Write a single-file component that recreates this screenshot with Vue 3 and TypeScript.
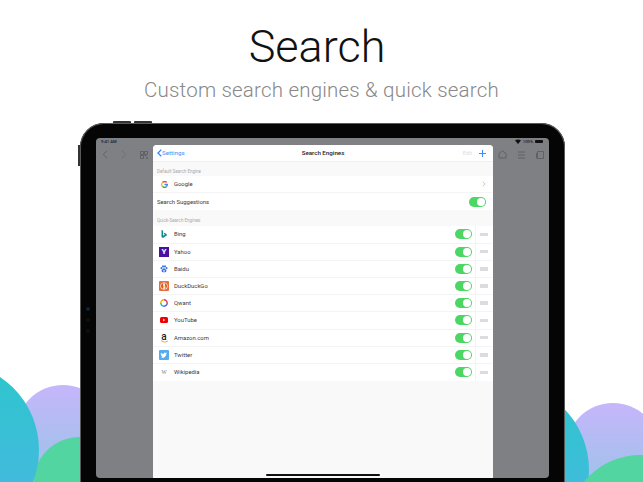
<script setup lang="ts">
interface Engine {
  name: string
  icon: string
}

const engines: Engine[] = [
  { name: 'Bing', icon: 'bing' },
  { name: 'Yahoo', icon: 'yahoo' },
  { name: 'Baidu', icon: 'baidu' },
  { name: 'DuckDuckGo', icon: 'duck' },
  { name: 'Qwant', icon: 'qwant' },
  { name: 'YouTube', icon: 'youtube' },
  { name: 'Amazon.com', icon: 'amazon' },
  { name: 'Twitter', icon: 'twitter' },
  { name: 'Wikipedia', icon: 'wiki' }
]
</script>

<template>
  <div class="page">
    <div class="blob teal left"></div>
    <div class="blob purple left"></div>
    <div class="blob green left"></div>
    <div class="blob teal right"></div>
    <div class="blob purple right"></div>
    <div class="blob green right"></div>

    <h1 class="title">Search</h1>
    <p class="subtitle">Custom search engines &amp; quick search</p>

    <div class="device">
      <span class="hw top one"></span>
      <span class="hw top two"></span>
      <span class="hw side"></span>
      <span class="cam c1"></span>
      <span class="cam c2"></span>
      <span class="cam c3"></span>

      <div class="screen">
        <div class="status">
          <span>9:41 AM</span>
          <span class="status-right">
            <svg width="6" height="5" viewBox="0 0 6 5"><path d="M0 1.600C1.700 0 4.300 0 6 1.600L3 5z" fill="#111" /></svg>
            100%
            <i class="battery"></i>
          </span>
        </div>
        <div class="toolbar">
          <div class="tools">
            <svg width="6" height="9" viewBox="0 0 6 9"><path d="M5 .8 1.200 4.500 5 8.200" class="tool" /></svg>
            <svg width="6" height="9" viewBox="0 0 6 9"><path d="M1 .8 4.800 4.500 1 8.200" class="tool dim" /></svg>
            <svg width="8" height="8" viewBox="0 0 8 8">
              <path d="M.5.5h3v3h-3zM4.500.5h3v3h-3zM.5 4.500h3v3h-3z" class="tool" />
              <path d="M4.500 4.500h1.500v1.500M7.500 6v1.500H6" class="tool" />
            </svg>
          </div>
          <div class="tools">
            <svg width="9" height="9" viewBox="0 0 9 9"><path d="M1 8V3.600L4.500.8 8 3.600V8z" class="tool" /></svg>
            <svg width="9" height="8" viewBox="0 0 9 8"><path d="M1 1h7M1 4h7M1 7h7" class="tool" /></svg>
            <svg width="8" height="8" viewBox="0 0 8 8"><path d="M1.500.5h6v7h-6zM.5 2v5.500" class="tool" /></svg>
          </div>
        </div>

        <div class="sheet">
          <header class="nav">
            <span class="back">
              <svg width="5" height="8" viewBox="0 0 5 8"><path d="M4.300.6 1 4l3.300 3.400" fill="none" stroke="#2f87f5" stroke-width="1.300" /></svg>
              Settings
            </span>
            <strong class="nav-title">Search Engines</strong>
            <span class="nav-actions">
              <span class="edit">Edit</span>
              <svg width="7" height="7" viewBox="0 0 7 7"><path d="M3.500 0v7M0 3.500h7" stroke="#3d8ff5" stroke-width="1.100" /></svg>
            </span>
          </header>

          <div class="section-label first">Default Search Engine</div>
          <div class="group">
            <div class="row">
              <span class="icon">
                <svg width="7" height="7" viewBox="0 0 14 14" fill="none" stroke-width="2.600">
                  <path d="M11.300 3 A5.700 5.700 0 0 0 3 2.900" stroke="#ea4335" />
                  <path d="M3 2.900 A5.700 5.700 0 0 0 3 11.100" stroke="#fbbc05" />
                  <path d="M3 11.100 A5.700 5.700 0 0 0 11 11" stroke="#34a853" />
                  <path d="M11 11 A5.700 5.700 0 0 0 12.700 7H7" stroke="#4285f4" />
                </svg>
              </span>
              <span class="name">Google</span>
              <svg class="chev" width="4" height="6" viewBox="0 0 4 6"><path d="M.7.6 3.200 3 .7 5.400" fill="none" stroke="#c6c6c8" /></svg>
            </div>
            <div class="row plain">
              <span class="name">Search Suggestions</span>
              <span class="switch"><i></i></span>
            </div>
          </div>

          <div class="section-label">Quick-Search Engines</div>
          <div class="group">
            <div v-for="engine in engines" :key="engine.name" class="row">
              <span class="icon">
                <svg v-if="engine.icon === 'bing'" width="6" height="8" viewBox="0 0 6 8">
                  <path d="M.5 0 2 .5v5.200l2-1.200-1-.5L2.500 2.400 5.700 4v1.400L2 8 .5 7z" fill="#0f8a8c" />
                </svg>
                <span v-else-if="engine.icon === 'yahoo'" class="tile yahoo">Y</span>
                <svg v-else-if="engine.icon === 'baidu'" width="8" height="8" viewBox="0 0 8 8" fill="#3a6fe8">
                  <ellipse cx="1.400" cy="3.200" rx=".9" ry="1.100" />
                  <ellipse cx="3" cy="1.400" rx=".9" ry="1.200" />
                  <ellipse cx="5" cy="1.400" rx=".9" ry="1.200" />
                  <ellipse cx="6.600" cy="3.200" rx=".9" ry="1.100" />
                  <path d="M4 3.300c1 0 1.300 1 2 1.500.8.700.6 2.500-1 2.500H3C1.400 7.300 1.200 5.500 2 4.800c.7-.5 1-1.500 2-1.500z" />
                  <ellipse cx="4" cy="5.800" rx="1" ry=".9" fill="#cdddfb" />
                </svg>
                <svg v-else-if="engine.icon === 'duck'" width="10" height="10" viewBox="0 0 10 10">
                  <rect width="10" height="10" rx="1" fill="#e4713a" />
                  <circle cx="5" cy="5" r="3.600" fill="#fff" />
                  <circle cx="5" cy="5" r="3" fill="#de5833" />
                  <path d="M3.900 2.500h2.200l-.3 2 .7 1.500-1 2H4.300l.2-2.500z" fill="#fff" />
                  <path d="M4.800 5.300h1.500v.7H4.800z" fill="#f5c518" />
                </svg>
                <svg v-else-if="engine.icon === 'qwant'" width="8" height="8" viewBox="0 0 8 8" fill="none" stroke-width="1.400">
                  <path d="M4 .8A3.200 3.200 0 0 0 .8 4" stroke="#f2b705" />
                  <path d="M.8 4A3.200 3.200 0 0 0 4 7.200" stroke="#19b6c9" />
                  <path d="M4 7.200A3.200 3.200 0 0 0 7.200 4" stroke="#5a55d9" />
                  <path d="M7.200 4A3.200 3.200 0 0 0 4 .8" stroke="#e8385b" />
                </svg>
                <svg v-else-if="engine.icon === 'youtube'" width="8" height="6" viewBox="0 0 8 6">
                  <rect width="8" height="6" rx="1.500" fill="#f00000" />
                  <path d="M3.200 1.700 5.200 3 3.200 4.300z" fill="#fff" />
                </svg>
                <span v-else-if="engine.icon === 'amazon'" class="amazon">
                  a
                  <svg width="7" height="3" viewBox="0 0 7 3"><path d="M.3.600C2 2.400 4.800 2.500 6.700.8" fill="none" stroke="#f29a1f" stroke-width="1.100" /></svg>
                </span>
                <svg v-else-if="engine.icon === 'twitter'" width="10" height="10" viewBox="0 0 10 10">
                  <rect width="10" height="10" rx="1" fill="#55acee" />
                  <path d="M8 3.100c-.3.100-.5.200-.8.200.3-.2.500-.4.600-.7-.3.200-.6.300-.9.300a1.300 1.300 0 0 0-2.200 1.200C3.600 4 2.700 3.500 2 2.800c-.4.600-.2 1.300.4 1.700-.2 0-.4 0-.6-.1 0 .6.400 1.100 1 1.300h-.6c.2.500.6.800 1.200.9-.5.400-1.100.6-1.800.5a3.700 3.700 0 0 0 5.700-3.300c.3-.2.500-.4.700-.7z" fill="#fff" />
                </svg>
                <span v-else class="wiki">W</span>
              </span>
              <span class="name">{{ engine.name }}</span>
              <span class="switch"><i></i></span>
              <span class="handle"><i></i></span>
            </div>
          </div>

          <div class="home-bar"></div>
        </div>
      </div>
    </div>
  </div>
</template>

<style>
html,
body {
  margin: 0;
  background: #fff;
}
</style>

<style scoped>
.page {
  position: relative;
  width: 643px;
  height: 482px;
  overflow: hidden;
  background: #fff;
  font-family: Roboto, "Liberation Sans", sans-serif;
  text-align: center;
}

.blob {
  position: absolute;
  border-radius: 50%;
}
.teal {
  width: 176px;
  height: 176px;
  background: linear-gradient(#2cc6cc, #4cb6e4);
}
.teal.left {
  left: -137px;
  top: 362px;
  z-index: 3;
}
.teal.right {
  left: 413px;
  top: 382px;
  z-index: 1;
}
.purple {
  width: 94px;
  height: 94px;
  background: linear-gradient(#c6b6fb, #98c4e6);
}
.purple.left {
  left: 16px;
  top: 385px;
}
.purple.right {
  left: 566px;
  top: 403px;
  z-index: 0;
}
.green {
  background: #53d5a1;
}
.green.left {
  left: 33px;
  top: 437px;
  width: 94px;
  height: 94px;
  z-index: 1;
}
.green.right {
  left: 568px;
  top: 455px;
  width: 144px;
  height: 144px;
  z-index: 2;
}

.title,
.subtitle {
  position: relative;
  margin: 0;
  font-weight: 300;
}
.title {
  padding: 20px 9px 0 0;
  height: 54px;
  line-height: 54px;
  font-size: 45px;
  color: #111;
}
.subtitle {
  margin-top: 2px;
  height: 28px;
  line-height: 28px;
  font-size: 20.500px;
  letter-spacing: 0.2px;
  color: #888;
}

.device {
  position: relative;
  z-index: 4;
  box-sizing: border-box;
  width: 485px;
  height: 380px;
  margin: 19px 0 0 80px;
  padding: 15px 16px 0;
  background: #050505;
  border-radius: 24px;
  box-shadow: inset 0 0 0 1px #5a5a5a;
}
.hw {
  position: absolute;
  background: #333;
}
.hw.top {
  top: -2px;
  width: 18px;
  height: 2px;
  border-radius: 1px 1px 0 0;
}
.hw.one {
  left: 33px;
}
.hw.two {
  left: 54px;
}
.hw.side {
  left: -2px;
  top: 22px;
  width: 2px;
  height: 21px;
}
.cam {
  position: absolute;
  left: 6px;
  width: 4px;
  height: 4px;
  border-radius: 50%;
  background: #101010;
}
.c1 {
  top: 184px;
  background: #10233a;
}
.c2 {
  top: 195px;
}
.c3 {
  top: 206px;
}

.screen {
  position: relative;
  box-sizing: border-box;
  height: 340px;
  padding: 0 5px;
  overflow: hidden;
  background: #7f8083;
  border-radius: 4px;
  text-align: left;
}
.status {
  display: flex;
  justify-content: space-between;
  height: 7px;
  line-height: 8px;
  font-size: 4.200px;
  font-weight: 500;
  color: #1d1d1f;
}
.status-right {
  display: flex;
  align-items: center;
  gap: 2px;
  padding-right: 1px;
}
.battery {
  display: block;
  width: 8px;
  height: 3.500px;
  border-radius: 1px;
  background: #111;
}
.toolbar {
  display: flex;
  justify-content: space-between;
  padding: 5px 0 0 1px;
}
.tools {
  display: flex;
  align-items: center;
  gap: 10px;
}
.tools:first-child {
  gap: 13px;
}
.tool {
  fill: none;
  stroke: #606164;
  stroke-width: 1;
}
.tool.dim {
  stroke: #6f7073;
}

.sheet {
  position: absolute;
  left: 57px;
  top: 7px;
  bottom: 0;
  width: 340px;
  overflow: hidden;
  background: #f9f9fa;
  border-radius: 4px 4px 0 0;
  text-align: left;
  color: #333;
}
.nav {
  display: flex;
  align-items: center;
  justify-content: space-between;
  position: relative;
  box-sizing: border-box;
  height: 17px;
  padding: 0 7px 0 4px;
  background: #fff;
  border-bottom: 1px solid #f0f0f1;
}
.back {
  display: flex;
  align-items: center;
  gap: 0;
  font-size: 6.200px;
  color: #3d8ff5;
}
.nav-title {
  position: absolute;
  left: 0;
  right: 0;
  text-align: center;
  font-size: 6.200px;
  font-weight: 500;
  color: #222;
}
.nav-actions {
  position: relative;
  display: flex;
  align-items: center;
  gap: 7px;
}
.edit {
  font-size: 5.500px;
  color: #dcdcde;
}
.section-label {
  box-sizing: border-box;
  height: 16px;
  padding: 8px 0 0 4px;
  line-height: 6px;
  font-size: 4.500px;
  color: #a9a9ac;
}
.section-label.first {
  height: 14px;
  padding-top: 7px;
}
.group {
  background: #fff;
}
.row {
  display: flex;
  align-items: center;
  box-sizing: border-box;
  height: 17.200px;
  padding-left: 6px;
  border-bottom: 1px solid #f4f4f5;
  font-size: 5.900px;
}
.row:last-child {
  border-bottom: 0;
}
.row.plain {
  padding-left: 4px;
  padding-right: 7px;
  justify-content: space-between;
}
.icon {
  display: flex;
  align-items: center;
  justify-content: center;
  flex: none;
  width: 10px;
  height: 10px;
  margin-right: 5px;
}
.name {
  flex: 1;
  color: #3a3a3c;
}
.chev {
  margin-right: 7px;
}
.switch {
  display: block;
  flex: none;
  box-sizing: border-box;
  width: 17px;
  height: 10px;
  padding: 1px 1px 1px 8px;
  border-radius: 5px;
  background: #4cd664;
}
.switch i {
  display: block;
  width: 8px;
  height: 8px;
  border-radius: 50%;
  background: #fff;
}
.handle {
  display: flex;
  align-items: center;
  justify-content: center;
  flex: none;
  box-sizing: border-box;
  align-self: stretch;
  width: 18px;
  margin-left: 3px;
  padding-right: 2px;
  border-left: 1px solid #f4f4f5;
}
.handle i {
  display: block;
  width: 8px;
  height: 3.500px;
  background: #dcdcde;
}
.tile.yahoo {
  display: block;
  width: 10px;
  height: 10px;
  line-height: 10px;
  text-align: center;
  font-size: 8px;
  font-weight: 700;
  color: #fff;
  background: #4a0f9e;
}
.amazon {
  position: relative;
  display: block;
  width: 10px;
  height: 11px;
  line-height: 9px;
  text-align: center;
  font-size: 10px;
  font-weight: 500;
  color: #222;
}
.amazon svg {
  position: absolute;
  left: 1.500px;
  top: 7.500px;
}
.wiki {
  font-family: "Liberation Serif", serif;
  font-size: 5.500px;
  color: #777;
}
.home-bar {
  position: absolute;
  left: 113px;
  bottom: 2px;
  width: 114px;
  height: 2px;
  border-radius: 1px;
  background: #111;
}
</style>
